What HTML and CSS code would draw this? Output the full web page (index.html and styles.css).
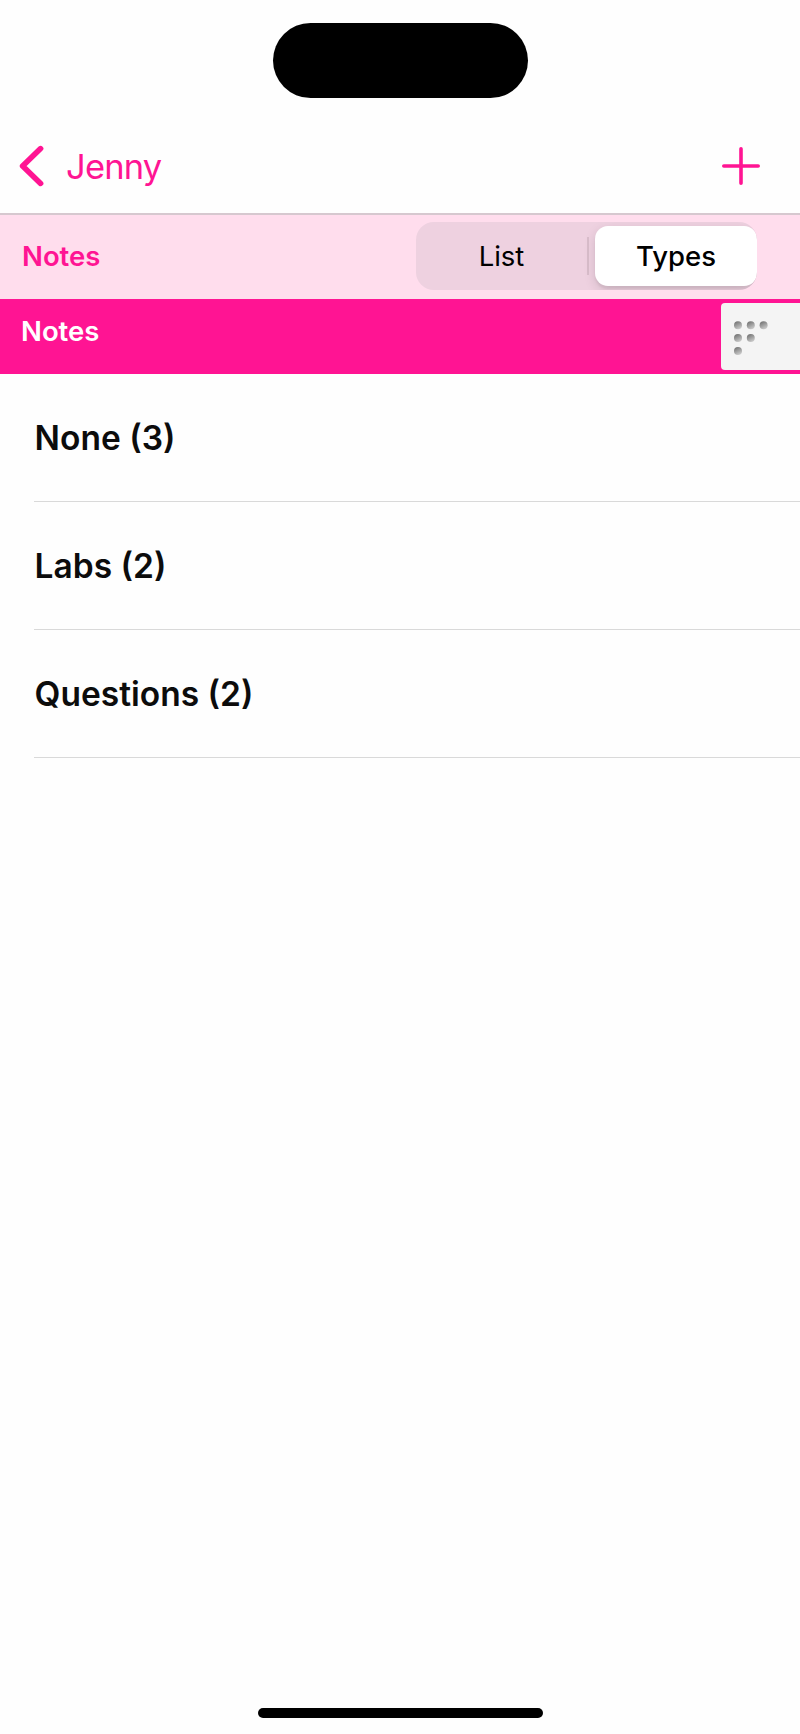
FILE: index.html
```html
<!DOCTYPE html>
<html lang="en">
<head>
    <meta charset="UTF-8">
    <meta name="viewport" content="width=device-width, initial-scale=1.0">
    <title>Notes</title>
    <link rel="stylesheet" href="styles.css">
</head>
<body>
    <div class="screen">
        <div class="status-bar">
            <div class="island"></div>
        </div>

        <header class="nav">
            <a class="back" href="#">
                <svg class="chevron" width="26" height="42" viewBox="0 0 26 42">
                    <path d="M21.6 3.6 L3.6 21 L21.6 38.4" fill="none" stroke="#ff1493" stroke-width="5.6" stroke-linecap="round" stroke-linejoin="round"/>
                </svg>
                <span class="back-label">Jenny</span>
            </a>
            <svg class="plus" width="38" height="38" viewBox="0 0 38 38">
                <path d="M19 1.8 V36.2 M1.8 19 H36.2" fill="none" stroke="#ff1493" stroke-width="3.6" stroke-linecap="round"/>
            </svg>
        </header>

        <div class="toolbar">
            <span class="toolbar-title">Notes</span>
            <div class="segments">
                <div class="segment">List</div>
                <div class="divider"></div>
                <div class="segment selected">Types</div>
            </div>
        </div>

        <div class="section">
            <span class="section-title">Notes</span>
            <div class="grip">
                <svg width="34" height="34" viewBox="0 0 34 34">
                    <defs>
                        <linearGradient id="dot" x1="0.2" y1="0" x2="0.7" y2="1">
                            <stop offset="0" stop-color="#707070"/>
                            <stop offset="1" stop-color="#cfcfcf"/>
                        </linearGradient>
                    </defs>
                    <g fill="url(#dot)">
                        <circle cx="4" cy="4.3" r="4"/>
                        <circle cx="16.8" cy="4.3" r="4"/>
                        <circle cx="29.6" cy="4.3" r="4"/>
                        <circle cx="4" cy="17.1" r="4"/>
                        <circle cx="16.8" cy="17.1" r="4"/>
                        <circle cx="4" cy="29.9" r="4"/>
                    </g>
                </svg>
            </div>
        </div>

        <ul class="types">
            <li class="type">None (3)</li>
            <li class="type">Labs (2)</li>
            <li class="type">Questions (2)</li>
        </ul>

        <div class="home-indicator"></div>
    </div>
</body>
</html>
```
FILE: styles.css
```css
* {
    box-sizing: border-box;
}
body {
    margin: 0;
    background-color: #fefefe;
    font-family: Inter, "Liberation Sans", sans-serif;
    color: #0c0c0c;
}
.screen {
    display: flex;
    flex-direction: column;
    height: 1734px;
    overflow: hidden;
}
.status-bar {
    display: flex;
    justify-content: center;
    height: 119px;
    padding-top: 23px;
}
.island {
    width: 255px;
    height: 75px;
    border-radius: 38px;
    background-color: #000;
}
/* Navigation */
.nav {
    display: flex;
    justify-content: space-between;
    align-items: center;
    height: 96px;
    padding: 0 40px 0 19px;
    border-bottom: 2px solid #d6c8cf;
}
.back {
    display: flex;
    align-items: center;
    gap: 21px;
    color: #ff1493;
    text-decoration: none;
}
.back-label {
    font-size: 34.5px;
    line-height: 42px;
    letter-spacing: -0.8px;
    padding-top: 1px;
}
.chevron, .plus {
    display: block;
}
/* Pink bar with the List / Types switch */
.toolbar {
    display: flex;
    justify-content: space-between;
    align-items: flex-start;
    height: 84px;
    padding: 7px 43px 0 22px;
    background-color: #ffdded;
}
.toolbar-title {
    color: #ff1493;
    font-size: 27.5px;
    font-weight: 600;
    line-height: 69px;
}
.segments {
    display: flex;
    align-items: center;
    width: 341px;
    height: 68px;
    border-radius: 18px;
    background-color: #eed1e0;
    overflow: hidden;
}
.segment {
    flex: 1;
    text-align: center;
    font-size: 27.5px;
    line-height: 61px;
    color: #000;
}
.divider {
    width: 2px;
    height: 38px;
    margin-right: 6px;
    background-color: #d9bdcb;
}
.selected {
    flex: none;
    width: 162px;
    height: 60px;
    border-radius: 13px;
    background-color: #fff;
    font-weight: 500;
    box-shadow: 0 4px 12px rgba(0, 0, 0, 0.13), 0 3px 2px rgba(0, 0, 0, 0.05);
}
/* Section header */
.section {
    display: flex;
    justify-content: space-between;
    height: 75px;
    padding: 4px 0 4px 21px;
    background-color: #ff1493;
}
.section-title {
    color: #fff;
    font-size: 27.5px;
    font-weight: 600;
    line-height: 56px;
}
.grip {
    width: 79px;
    height: 67px;
    padding: 18px 13px;
    border-radius: 4px 0 0 4px;
    background-color: #f4f4f4;
}
.grip svg {
    display: block;
}
/* Note types */
.types {
    margin: 0;
    padding: 0 0 0 34px;
    list-style: none;
}
.type {
    height: 128px;
    border-bottom: 1px solid #d9d9d9;
    font-size: 33.5px;
    font-weight: 600;
    line-height: 129px;
    text-indent: 0.6px;
}
.home-indicator {
    width: 285px;
    height: 10px;
    margin: auto auto 16px 258px;
    border-radius: 5px;
    background-color: #000;
}
```
